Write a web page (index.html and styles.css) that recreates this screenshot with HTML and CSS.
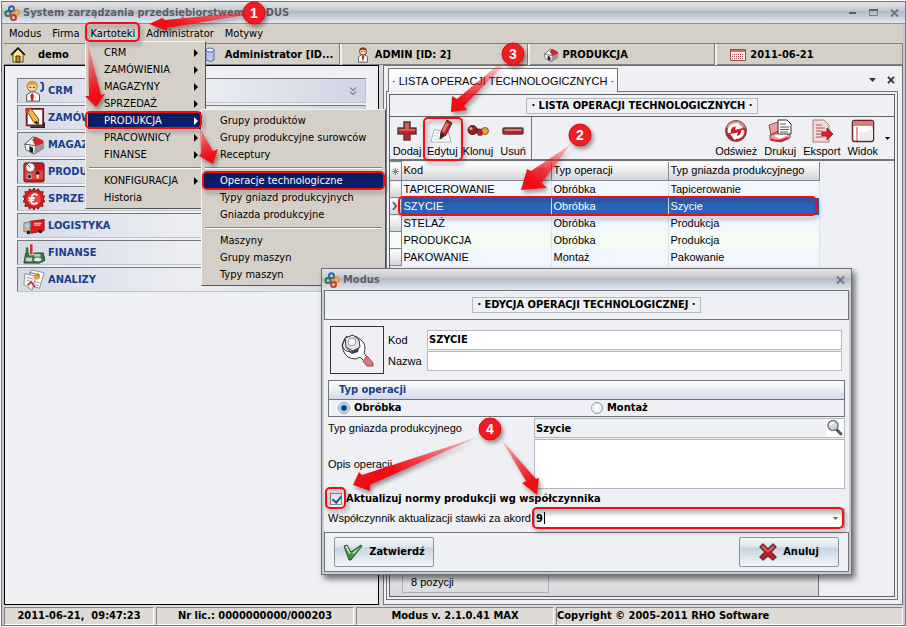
FILE: index.html
```html
<!DOCTYPE html>
<html lang="pl">
<head>
<meta charset="utf-8">
<title>System zarządzania przedsiębiorstwem MODUS</title>
<link rel="stylesheet" href="styles.css">
</head>
<body>
<svg class="defs" aria-hidden="true">
  <defs>
    <symbol id="logo" viewBox="0 0 16 16"><g fill="none" stroke-width="2"><circle cx="4" cy="8.500" r="2.600" stroke="#17815a"/><circle cx="7.500" cy="3.800" r="2.500" stroke="#2463ae"/><circle cx="12.500" cy="7.500" r="2.500" stroke="#e89a30"/><circle cx="9.500" cy="12.500" r="2.500" stroke="#c93b22"/><path d="M6 9l3 1M9 5l2 1" stroke="#c4502f"/></g></symbol>
    <symbol id="house" viewBox="0 0 16 16"><path d="M3 7v8h10V7L8 2z" fill="#ffe98c" stroke="#51441a"/><path d="M1 8l7-7 7 7" fill="none" stroke="#111" stroke-width="1.600"/><path d="M6 15V9h4v6z" fill="#c98c32" stroke="#3c2b0e"/></symbol>
    <symbol id="db" viewBox="0 0 16 16"><path d="M1 3v10q5 3 8 0V3z" fill="#b9c4ec" stroke="#5b68a8"/><ellipse cx="5" cy="3" rx="4" ry="2" fill="#eef1fc" stroke="#5b68a8"/></symbol>
    <symbol id="shop" viewBox="0 0 24 24"><path d="M2 11l9-7 11 5v7l-10 6-9-5z" fill="#f7f7f7" stroke="#555"/><path d="M2 11l9-8 11 5-8 5z" fill="#f4f4f4" stroke="#444"/><path d="M10 6l4-3 8 4v4l-8 3z" fill="#d3252b"/><path d="M13 14l9-4v6l-10 6z" fill="#999"/><path d="M7 13v6l4 2v-6z" fill="#222"/></symbol>
    <symbol id="man" viewBox="0 0 16 18"><path d="M3 17v-6l3-2h4l3 2v6z" fill="#fff" stroke="#555"/><circle cx="8" cy="5" r="4" fill="#f8d2aa" stroke="#6d3212"/><path d="M4 4q0-3.500 4-3.500T12 4q-4-2-8 0" fill="#873b13"/><path d="M8 9l1.500 2L8 17l-1.500-6z" fill="#d4171d"/><path d="M6 5h1M9 5h1" stroke="#222"/></symbol>
    <symbol id="cal" viewBox="0 0 16 12"><path d="M.5.5h15v11H.5z" fill="#fff5f3" stroke="#86504e"/><path d="M1 2h14" stroke="#db6969" stroke-width="2"/><path d="M2 5.500h12M2 7.500h12M2 9.500h12" stroke="#ad4747" stroke-dasharray="1 1"/></symbol>
    <symbol id="crm" viewBox="0 0 24 24"><path d="M4 23v-7l5-3h4l5 3v7z" fill="#fff" stroke="#444"/><circle cx="10" cy="7" r="5.500" fill="#ffd2a0" stroke="#a5661c"/><path d="M4 7q0-6 6-6t6 6q-5-4-12 0" fill="#dda12e"/><path d="M7 8h2M11 8h2" stroke="#222"/><path d="M10 14l2 3-1 6H9l-1-6z" fill="#d5191f"/><path d="M19 3q3-1 3 3v3q0 3-3 3" fill="none" stroke="#223a8b" stroke-width="2"/></symbol>
    <symbol id="order" viewBox="0 0 24 24"><path d="M4 2h18v18H4z" fill="#fff" stroke="#771a1d" stroke-width="2"/><path d="M8 22h15v-5" fill="none" stroke="#222" stroke-width="2"/><path d="M4 4l4-3 9 12v6l-5-2z" fill="#f6b83c" stroke="#673e13"/><path d="M2 3l4-2 2 3-4 3z" fill="#d93c38"/><path d="M15 15l2 4-5-2z" fill="#241813"/></symbol>
    <symbol id="machine" viewBox="0 0 24 24"><rect x="1" y="2" width="22" height="21" rx="2" fill="#c51b20" stroke="#69151a"/><path d="M2 20V4q9 8 20 6v10z" fill="#e34443"/><circle cx="8" cy="7" r="5" fill="#f4f4f4" stroke="#555"/><path d="M8 7l-3-3" stroke="#222"/><circle cx="7" cy="17" r="2.500" fill="#333" stroke="#ccc"/><path d="M16 12v7" stroke="#fff" stroke-width="2"/><circle cx="16" cy="13" r="2" fill="#222"/></symbol>
    <symbol id="euro" viewBox="0 0 24 24"><path d="M12 0l2 3 3-2 1 3 4 0-1 4 3 1-2 3 2 3-3 1 1 4-4 0-1 3-3-2-2 3-2-3-3 2-1-3-4 0 1-4-3-1 2-3-2-3 3-1-1-4 4 0 1-3 3 2z" fill="#cf2020" stroke="#7f1517"/><circle cx="12" cy="12" r="7.500" fill="#e64745"/><path d="M16 8q-6-4-7 4t7 4M6 11h7M6 13.500h6" fill="none" stroke="#fff" stroke-width="1.800"/></symbol>
    <symbol id="truck" viewBox="0 0 24 24"><path d="M7 7l16-2v12l-14 3z" fill="#da1d22" stroke="#8a1518"/><path d="M1 9l7-2v12l-7-1z" fill="#e9a784" stroke="#777"/><path d="M2 10l5-1v4H2z" fill="#8ddbe2"/><path d="M12 9h8M12 11h7" stroke="#fff"/><circle cx="6" cy="19" r="2" fill="#222"/><circle cx="19" cy="18" r="2" fill="#222"/></symbol>
    <symbol id="bank" viewBox="0 0 24 24"><path d="M3 12h19l2 8-6 3H1z" fill="#49704e" stroke="#21402b"/><path d="M3 6h3v12H3z" fill="#337640"/><path d="M7 2h4v12H7z" fill="#cc3537" stroke="#eee"/><path d="M12 13h7v3h-7z" fill="#a7d8a9"/><ellipse cx="16" cy="19" rx="4" ry="2" fill="#dcebdc"/><path d="M3 17h7v4H3z" fill="#c5d5c6"/></symbol>
    <symbol id="report" viewBox="0 0 24 24"><path d="M9 1l14 3-5 17-14-4z" fill="#fff" stroke="#888"/><path d="M2 5l12 3-4 15-9-6z" fill="#f6f6f6" stroke="#888"/><circle cx="15" cy="8" r="3.500" fill="#ef9a41"/><path d="M15 8V4.500A3.500 3.500 0 0118.500 8z" fill="#55a944"/><path d="M4 9l7 2M4 12l6 2M13 14l5 1M13 17l4 1" stroke="#9191a6"/><path d="M5 18l4-4 4 6" fill="none" stroke="#c83a36" stroke-width="2"/><path d="M7 4l6 1" stroke="#4b62a9"/></symbol>
    <symbol id="plus" viewBox="0 0 24 24"><path d="M9 3h6v6h6v6h-6v6H9v-6H3V9h6z" fill="#bd2224" stroke="#54413f" stroke-width="1.500"/><path d="M10 4h4v6h6v2H4v-2h6z" fill="#dc5c59"/></symbol>
    <symbol id="edit" viewBox="0 0 24 24"><path d="M4 11l14 1 3 11H1z" fill="#fff" stroke="#aaa"/><path d="M4 20h12M5 14h4M4 17h5" stroke="#c7c7c7"/><path d="M17 1l5 3-6 12-6 4 1-7z" fill="#c71e22" stroke="#462c2c"/><path d="M16 3l3 2-5 9-2-2z" fill="#ec7670"/><path d="M11 13l4 3-5 4z" fill="#342b2d"/></symbol>
    <symbol id="clone" viewBox="0 0 24 24"><path d="M6 9l12 1v5L6 14z" fill="#891a1a"/><circle cx="6.500" cy="11" r="4.500" fill="#a9191a" stroke="#3f2020"/><circle cx="19" cy="12" r="3.500" fill="#dca74b" stroke="#815a26"/><circle cx="14" cy="14" r="3" fill="#b82323"/><circle cx="5" cy="9.500" r="1.600" fill="#eea19d"/></symbol>
    <symbol id="minus" viewBox="0 0 24 24"><rect x="2" y="9" width="20" height="6" rx="1" fill="#b92123" stroke="#54413f" stroke-width="1.500"/><path d="M3.500 11h17" stroke="#e47572" stroke-width="2"/></symbol>
    <symbol id="refresh" viewBox="0 0 24 24"><circle cx="12" cy="12" r="10.500" fill="#cf1c22" stroke="#555"/><path d="M2.500 9a10 10 0 0119 0q-9-3-19 0z" fill="#e58683"/><path d="M5.500 14a6 6 0 018-7.500" fill="none" stroke="#fff" stroke-width="3.200"/><path d="M13 3l6 6-8 2z" fill="#fff"/><path d="M18.500 11a6 6 0 01-8 7" fill="none" stroke="#fff" stroke-width="3.200"/><path d="M11 21.500L6 15l8-1.500z" fill="#fff"/></symbol>
    <symbol id="print" viewBox="0 0 24 24"><path d="M1 6l9-3 2 10-9 3zM2 16l10-5 10 3v5l-9 4-11-2z" fill="#eba09d" stroke="#94504f"/><path d="M6 17l6-3 8 2-8 4z" fill="#fff"/><path d="M10 1h9l4 4v10H10z" fill="#fff" stroke="#333"/><path d="M12 5h6M12 8h9M12 10.500h9M12 13h8" stroke="#555"/><path d="M3 20q7 4 17-1" fill="none" stroke="#c6282b" stroke-width="2"/></symbol>
    <symbol id="export" viewBox="0 0 24 24"><path d="M3 1h11l5 5v17H3z" fill="#f7d9d7" stroke="#a27e7d"/><path d="M6 6h6M6 9h9M6 12h7M6 15h6M6 18h7" stroke="#a35b5a"/><path d="M12 13h5V9l6 6-6 6v-4h-5z" fill="#da2327" stroke="#8b2627"/></symbol>
    <symbol id="view" viewBox="0 0 24 24"><rect x="1.500" y="1.500" width="21" height="21" rx="2" fill="#fff" stroke="#6a2428" stroke-width="1.500"/><path d="M2 2h20v5H2z" fill="#db7e7b"/><path d="M6 8v14" stroke="#c43134"/><path d="M8 13q7 1 14-3v11H8z" fill="#ececec"/></symbol>
    <symbol id="wrench" viewBox="0 0 34 34"><path d="M7 3q-6 6-4 14 3 9 13 9l4-2 6 6 3-3-5-7q3-8-3-13-4-4-8-4l5 7q0 7-7 9-7 0-9-7z" fill="#fff" stroke="#333"/><path d="M5 5l8-3 6 5 1 7-7 4-7-4z" fill="#e5e5ea" stroke="#333"/><path d="M5 14l7 5 7-4-1 4-6 2z" fill="#34365e"/><circle cx="12" cy="9" r="4" fill="#fafafa" stroke="#999"/><path d="M23 28l4-5 6 7v3h-6z" fill="#dd7b7c" stroke="#9b4649"/></symbol>
    <symbol id="lens" viewBox="0 0 18 18"><path d="M10 10l5 5" stroke="#555" stroke-width="3" stroke-linecap="round"/><circle cx="7" cy="6.500" r="5" fill="#d5d8d9" stroke="#777" stroke-width="1.500"/><path d="M4 6q1-3 4-2" fill="none" stroke="#fff" stroke-width="2"/></symbol>
    <symbol id="check" viewBox="0 0 20 18"><path d="M1 3l3-1 4 7 10-7 1 1L8 17H6z" fill="#42a33b" stroke="#3c453c"/><path d="M2 3l2 0 4 8 9-7-9 10z" fill="#d6e7d3"/><path d="M5 12l3-2 4 1-5 5z" fill="#2f9a2b"/></symbol>
    <symbol id="cross" viewBox="0 0 18 18"><path d="M4 1l5 5 5-5 3 3-5 5 5 5-3 3-5-4-5 4-3-3 5-5-5-5z" fill="#d51517" stroke="#633435" stroke-width="1.500" stroke-linejoin="round"/><path d="M4 2.500l5 5 5-5 1.500 1.500-4 4q-3 1-5 0l-4-4z" fill="#df6663"/></symbol>
    <symbol id="close" viewBox="0 0 9 8"><path d="M1 .5l7 7M8 .5l-7 7" stroke="currentColor" stroke-width="2"/></symbol>
    <symbol id="down" viewBox="0 0 8 8"><path d="M1 .5l3 3 3-3M1 4.500l3 3 3-3" fill="none" stroke="#444"/></symbol>
  </defs>
</svg>

<div class="window">
  <header class="titlebar">
    <svg class="logo"><use href="#logo"/></svg>
    <h1 class="caption">System zarządzania przedsiębiorstwem MODUS</h1>
    <div class="winbtns">
      <button class="wbtn" aria-label="Minimalizuj"><svg width="9" height="9"><path d="M1 5h7" stroke="#555b68" stroke-width="2"/></svg></button>
      <button class="wbtn" aria-label="Maksymalizuj"><svg width="9" height="9"><path d="M.5 1.500h8v6h-8z" fill="none" stroke="#6f7f99"/><path d="M0 2h9" stroke="#5a6274" stroke-width="2"/></svg></button>
      <button class="wbtn" aria-label="Zamknij"><svg width="9" height="8"><use href="#close"/></svg></button>
    </div>
  </header>

  <nav class="menubar">
    <button class="mi">Modus</button><button class="mi">Firma</button><button class="mi">Kartoteki</button><button class="mi">Administrator</button><button class="mi">Motywy</button>
  </nav>

  <div class="infobar">
    <div class="info"><svg class="i16"><use href="#house"/></svg><span>demo</span></div>
    <div class="info info-user"><svg class="i16"><use href="#db"/></svg><span>Administrator [ID...</span></div>
    <div class="info"><svg class="i16"><use href="#man"/></svg><span>ADMIN [ID: 2]</span></div>
    <div class="info"><svg class="i16"><use href="#shop"/></svg><span>PRODUKCJA</span></div>
    <div class="info"><svg class="i16"><use href="#cal"/></svg><span>2011-06-21</span></div>
  </div>

  <main class="work">
    <aside class="side">
      <a class="nav" href="#"><svg><use href="#crm"/></svg><span>CRM</span><svg class="chev"><use href="#down"/></svg></a>
      <a class="nav" href="#"><svg><use href="#order"/></svg><span>ZAMÓWIENIA</span><svg class="chev"><use href="#down"/></svg></a>
      <a class="nav" href="#"><svg><use href="#shop"/></svg><span>MAGAZYNY</span></a>
      <a class="nav" href="#"><svg><use href="#machine"/></svg><span>PRODUKCJA</span></a>
      <a class="nav" href="#"><svg><use href="#euro"/></svg><span>SPRZEDAŻ</span></a>
      <a class="nav" href="#"><svg><use href="#truck"/></svg><span>LOGISTYKA</span></a>
      <a class="nav" href="#"><svg><use href="#bank"/></svg><span>FINANSE</span></a>
      <a class="nav" href="#"><svg><use href="#report"/></svg><span>ANALIZY</span></a>
    </aside>

    <section class="dock">
      <div class="tabs">
        <button class="tab">· LISTA OPERACJI TECHNOLOGICZNYCH ·</button>
        <div class="tabtools">
          <button class="wbtn dark" aria-label="Lista kart"><svg width="7" height="4"><path d="M0 0h7L3.500 4z" fill="currentColor"/></svg></button>
          <button class="wbtn dark" aria-label="Zamknij kartę"><svg width="8" height="8"><use href="#close"/></svg></button>
        </div>
      </div>
      <div class="page">
        <div class="sheet">
          <div class="heading"><h2 class="plate">· LISTA OPERACJI TECHNOLOGICZNYCH ·</h2></div>
          <div class="tools">
            <div class="toolset">
              <button class="tool"><svg><use href="#plus"/></svg>Dodaj</button>
              <button class="tool"><svg><use href="#edit"/></svg>Edytuj</button>
              <button class="tool"><svg><use href="#clone"/></svg>Klonuj</button>
              <button class="tool"><svg><use href="#minus"/></svg>Usuń</button>
            </div>
            <div class="toolset toolset-right">
              <button class="tool"><svg><use href="#refresh"/></svg>Odśwież</button>
              <button class="tool"><svg><use href="#print"/></svg>Drukuj</button>
              <button class="tool"><svg><use href="#export"/></svg>Eksport</button>
              <button class="tool"><svg><use href="#view"/></svg>Widok</button>
              <button class="wbtn dark" aria-label="Więcej"><svg width="5" height="3"><path d="M0 0h5L2.500 3z" fill="#000"/></svg></button>
            </div>
          </div>
          <table class="grid">
            <colgroup><col class="c-mark"><col class="c-kod"><col class="c-typ"><col class="c-gn"></colgroup>
            <thead><tr><th class="mark"><svg width="7" height="7"><path d="M3.500 0v7M0 3.500h7M1 1l5 5M6 1L1 6" stroke="#888"/></svg></th><th><span class="sorted">Kod<svg width="7" height="6"><path d="M.5.500h6L3.500 5.500z" fill="none" stroke="#999"/></svg></span></th><th>Typ operacji</th><th>Typ gniazda produkcyjnego</th></tr></thead>
            <tbody>
              <tr><td class="mark"></td><td>TAPICEROWANIE</td><td>Obróbka</td><td>Tapicerowanie</td></tr>
              <tr class="sel"><td class="mark"><svg width="6" height="8"><path d="M1 0l3 4-3 4" fill="none" stroke="#5b6080" stroke-width="2"/></svg></td><td>SZYCIE</td><td>Obróbka</td><td>Szycie</td></tr>
              <tr><td class="mark"></td><td>STELAŻ</td><td>Obróbka</td><td>Produkcja</td></tr>
              <tr class="alt"><td class="mark"></td><td>PRODUKCJA</td><td>Obróbka</td><td>Produkcja</td></tr>
              <tr><td class="mark"></td><td>PAKOWANIE</td><td>Montaż</td><td>Pakowanie</td></tr>
            </tbody>
          </table>
          <div class="summary"><div class="count">8 pozycji</div></div>
        </div>
      </div>
    </section>
  </main>

  <footer class="status">
    <div class="st st-a">2011-06-21,&nbsp; 09:47:23</div>
    <div class="st st-b">Nr lic.: 0000000000/000203</div>
    <div class="st st-b">Modus v. 2.1.0.41 MAX</div>
    <div class="st st-c">Copyright © 2005-2011 RHO Software</div>
  </footer>
</div>

<div class="menu menu-main">
  <button class="item sub">CRM</button>
  <button class="item sub">ZAMÓWIENIA</button>
  <button class="item sub">MAGAZYNY</button>
  <button class="item sub">SPRZEDAŻ</button>
  <button class="item sub on">PRODUKCJA</button>
  <button class="item sub">PRACOWNICY</button>
  <button class="item sub">FINANSE</button>
  <hr class="sep">
  <button class="item sub">KONFIGURACJA</button>
  <button class="item">Historia</button>
</div>

<div class="menu menu-sub">
  <button class="item">Grupy produktów</button>
  <button class="item">Grupy produkcyjne surowców</button>
  <button class="item">Receptury</button>
  <hr class="sep">
  <button class="item on">Operacje technologiczne</button>
  <button class="item">Typy gniazd produkcyjnych</button>
  <button class="item">Gniazda produkcyjne</button>
  <hr class="sep">
  <button class="item">Maszyny</button>
  <button class="item">Grupy maszyn</button>
  <button class="item">Typy maszyn</button>
</div>

<form class="dialog">
  <div class="titlebar">
    <svg class="logo"><use href="#logo"/></svg>
    <h2 class="caption">Modus</h2>
    <div class="winbtns"><button type="button" class="wbtn" aria-label="Zamknij okno"><svg width="9" height="8"><use href="#close"/></svg></button></div>
  </div>
  <div class="dlg-head"><h3 class="plate">· EDYCJA OPERACJI TECHNOLOGICZNEJ ·</h3></div>
  <div class="dlg-body">
    <div class="ident">
      <div class="pic"><svg><use href="#wrench"/></svg></div>
      <div class="pairs">
        <label for="kod">Kod</label><input class="field" id="kod" type="text" value="SZYCIE">
        <label for="nazwa">Nazwa</label><input class="field" id="nazwa" type="text">
      </div>
    </div>
    <fieldset class="group">
      <legend class="group-title">Typ operacji</legend>
      <div class="radios">
        <label><input type="radio" name="typ" checked>Obróbka</label>
        <label><input type="radio" name="typ">Montaż</label>
      </div>
    </fieldset>
    <div class="rows">
      <label for="gniazdo">Typ gniazda produkcyjnego</label>
      <div class="lookup"><input class="field flat" id="gniazdo" type="text" value="Szycie"><button type="button" class="pick" aria-label="Szukaj"><svg><use href="#lens"/></svg></button></div>
      <label for="opis">Opis operacji</label>
      <textarea class="field area" id="opis"></textarea>
      <label class="tick"><input type="checkbox" checked>Aktualizuj normy produkcji wg współczynnika</label>
      <label for="wsp">Współczynnik aktualizacji stawki za akord</label>
      <div class="lookup combo"><input class="field flat" id="wsp" type="text" value="9"><button type="button" class="pick" aria-label="Rozwiń"><svg width="5" height="3"><path d="M0 0h5L2.500 3z" fill="#666"/></svg></button></div>
    </div>
  </div>
  <div class="dlg-foot">
    <button type="button" class="btn"><svg class="ic-check"><use href="#check"/></svg>Zatwierdź</button>
    <button type="button" class="btn"><svg class="ic-cross"><use href="#cross"/></svg>Anuluj</button>
  </div>
</form>

<svg class="marks" width="906" height="627" viewBox="0 0 906 627" aria-hidden="true">
  <defs>
    <linearGradient id="a1" gradientUnits="userSpaceOnUse" x1="244" y1="14" x2="149" y2="24"><stop offset="0" stop-color="#f22" stop-opacity=".5"/><stop offset=".8" stop-color="#f00f14"/></linearGradient>
    <linearGradient id="a1b" gradientUnits="userSpaceOnUse" x1="88" y1="43" x2="95" y2="107"><stop offset="0" stop-color="#f22" stop-opacity=".15"/><stop offset=".8" stop-color="#f00f14"/></linearGradient>
    <linearGradient id="a1c" gradientUnits="userSpaceOnUse" x1="200" y1="128" x2="213" y2="164"><stop offset="0" stop-color="#f22" stop-opacity=".3"/><stop offset=".8" stop-color="#f00f14"/></linearGradient>
    <linearGradient id="a2" gradientUnits="userSpaceOnUse" x1="570" y1="145" x2="521" y2="190"><stop offset="0" stop-color="#f22" stop-opacity=".2"/><stop offset=".8" stop-color="#f00f14"/></linearGradient>
    <linearGradient id="a3" gradientUnits="userSpaceOnUse" x1="500" y1="65" x2="451" y2="112"><stop offset="0" stop-color="#f22" stop-opacity=".2"/><stop offset=".8" stop-color="#f00f14"/></linearGradient>
    <linearGradient id="a4" gradientUnits="userSpaceOnUse" x1="478" y1="437" x2="354" y2="485"><stop offset="0" stop-color="#f22" stop-opacity=".2"/><stop offset=".7" stop-color="#f00f14"/></linearGradient>
    <linearGradient id="a4b" gradientUnits="userSpaceOnUse" x1="501" y1="439" x2="537" y2="495"><stop offset="0" stop-color="#f22" stop-opacity=".2"/><stop offset=".8" stop-color="#f00f14"/></linearGradient>
    <filter id="sh" x="-20%" y="-20%" width="150%" height="150%"><feDropShadow dx="2" dy="3" stdDeviation="2" flood-opacity=".4"/></filter>
  </defs>
  <g filter="url(#sh)">
    <path d="M246 12L165 20l-3-2-13 6 18 7v-3L246 15z" fill="url(#a1)"/>
    <path d="M88 43l1 53h-4l11 11 9-13-4 1z" fill="url(#a1b)"/>
    <path d="M200 128l1 25-2 3 14 8 5-15-5 2z" fill="url(#a1c)"/>
    <path d="M570 145L531 171l-4-2-6 21 26-2-5-5z" fill="url(#a2)"/>
    <path d="M499 64L457 99l-5-3-1 16 16-2-3-4L503 66z" fill="url(#a3)"/>
    <path d="M478 437L362 475l-3-3-6 13 17 6v-6z" fill="url(#a4)"/>
    <path d="M501 439l25 42-4 2 15 12 2-17-3 1z" fill="url(#a4b)"/>
  </g>
  <g class="rings" filter="url(#sh)">
    <rect x="86" y="23" width="53" height="18" rx="4"/>
    <rect x="86" y="112" width="115" height="16" rx="4"/>
    <rect x="203" y="172" width="181" height="17" rx="4"/>
    <rect x="424" y="118" width="38" height="42" rx="4"/>
    <rect x="399" y="197" width="417" height="18" rx="4"/>
    <rect x="326" y="488" width="19" height="20" rx="4"/>
    <rect x="533" y="508" width="310" height="20" rx="4"/>
  </g>
  <g class="dots" filter="url(#sh)">
    <circle cx="254" cy="13" r="11"/><circle cx="580" cy="135" r="11"/><circle cx="513" cy="54" r="11"/><circle cx="490" cy="429" r="11"/>
  </g>
  <g class="nums"><text x="254" y="18">1</text><text x="580" y="140">2</text><text x="513" y="59">3</text><text x="490" y="434">4</text></g>
</svg>
</body>
</html>
```
FILE: styles.css
```css
* { box-sizing: border-box; }
html, body { margin: 0; background: #fff; }
body {
  position: relative;
  font: 11px/16px "DejaVu Sans Condensed", "Liberation Sans", sans-serif;
  color: #000;
}
h1, h2, h3 { margin: 0; font-size: 11px; }
button { font: inherit; color: inherit; background: none; border: 0; padding: 0; }
svg { display: block; flex: none; }
.defs { position: absolute; width: 0; height: 0; }

/* Main window */
.window {
  display: flex; flex-direction: column;
  min-height: calc(100vh - 2px);
  margin: 1px 0 1px 1px;
  border: 1px solid #70757f;
  background: #c5c8ce;
}
.titlebar {
  display: flex; align-items: center; gap: 3px;
  height: 22px; padding: 0 6px 0 2px;
  border-bottom: 1px solid #8e939d;
  background: linear-gradient(#e4e4e6 0, #c9cacd 40%, #b3bac6 45%, #e2e8f3 100%);
}
.logo { width: 16px; height: 16px; }
.caption { flex: 1; color: #5a5e69; }
.winbtns { display: flex; gap: 12px; }
.wbtn { display: flex; align-items: center; justify-content: center; color: #6a7890; }
.dark { color: #333; }
.menubar { display: flex; gap: 11px; height: 19px; margin: 0 2px; padding-left: 5px; background: #d4d0c8; }
.infobar { display: flex; gap: 2px; margin: 0 2px; background: #f4f3f0; border-top: 1px solid #82807c; }
.info {
  display: flex; align-items: center; flex: 1 1 20px; gap: 4px;
  height: 21px; padding: 1px 0 0 13px; min-width: 0;
  background: #d4d0c8; border-right: 1px solid #82807c; border-bottom: 1px solid #82807c;
  font-weight: bold; white-space: nowrap;
}
.info-user { flex: 0 0 148px; }
.info:first-child { padding-left: 6px; gap: 12px; }
.i16 { width: 16px; height: 16px; }
.work { display: flex; flex: 1; gap: 4px; margin: 0 2px; background: #d8dade; }

/* Left navigation */
.side {
  display: flex; flex-direction: column; gap: 2px; flex: 0 0 375px;
  padding: 12px; border: 1px solid #000; background: #eff0f3;
}
.nav {
  display: flex; align-items: center; gap: 3px;
  height: 25px; padding: 0 8px 0 5px;
  border: 1px solid #75777d; border-right-color: #c0c4ca; border-bottom-color: #c0c4ca;
  background: linear-gradient(90deg, #d6dae5, #eceef3 50%, #cfd5e2);
  color: #16408c; font-weight: bold; text-decoration: none;
}
.nav svg { width: 22px; height: 22px; }
.nav span { flex: 1; }
.nav .chev { width: 8px; height: 8px; }

/* Right dock */
.dock {
  display: flex; flex-direction: column; flex: 1; min-width: 0;
  padding: 2px 4px 4px 2px; border: 1px solid #70737a; background: #eff0f3;
}
.tabs { display: flex; justify-content: space-between; align-items: center; padding: 0 3px 0 2px; height: 23px; }
.tab {
  position: relative; align-self: stretch; padding: 0 3px; margin-bottom: -1px;
  border: 1px solid #70737a; border-bottom: 0; background: linear-gradient(#fff, #eff0f3);
}
.tab, .tools, .grid, .count, .dlg-body { font-family: "Liberation Sans", sans-serif; font-size: 11px; }
.tabtools { display: flex; gap: 11px; }
.page { display: flex; flex: 1; padding: 2px; border: 1px solid #70737a; }
.sheet { display: flex; flex-direction: column; flex: 1; min-width: 0; border: 1px solid #5f6267; background: #eff0f3; }
.heading { display: flex; justify-content: center; align-items: center; height: 22px; border-bottom: 1px solid #5f6267; }
.plate { padding: 0 4px; border: 1px solid #b4b9c0; line-height: 14px; white-space: nowrap; }
.tools { display: flex; justify-content: space-between; height: 44px; border-bottom: 2px solid #70737a; }
.toolset { display: flex; gap: 5px; padding: 0 3px 0 2px; border-right: 1px solid #70737a; }
.toolset-right { gap: 7px; border: 0; padding-right: 4px; }
.tool { display: flex; flex-direction: column; align-items: center; gap: 1px; min-width: 30px; line-height: 14px; padding-top: 2px; }
.tool svg { width: 24px; height: 24px; }
.grid { width: 429px; table-layout: fixed; border-collapse: collapse; line-height: 15px; }
.c-mark { width: 11px; }
.c-kod { width: 150px; }
.c-typ { width: 117px; }
.c-gn { width: 151px; }
.grid th, .grid td { padding: 0 2px; height: 17px; text-align: left; font-weight: normal; white-space: nowrap; border-right: 1px solid #dce0e8; }
.grid th { height: 19px; border: 1px solid #84878e; border-top: 0; background: linear-gradient(#fff, #d3d4d8); }
.grid td { background: #f1f6ff; }
.grid .alt td { background: #f3fcf2; }
.grid .sel td { background: #2b63bc; color: #fff; }
.grid .mark, .grid .sel .mark { padding: 0 2px; border: 1px solid #84878e; border-left: 0; background: linear-gradient(#fff, #d3d4d8); }
.sorted { display: flex; justify-content: space-between; align-items: center; padding-right: 4px; }
.summary { width: 429px; margin-top: auto; padding: 0 0 3px 12px; border-right: 1px solid #70737a; background: linear-gradient(#eee, #d4d6da); }
.count { width: 147px; padding: 1px 8px 2px; border: 1px solid #aeb1b7; line-height: 16px; }

/* Status bar */
.status { display: flex; gap: 2px; height: 20px; margin: 0 2px; padding-top: 2px; background: #dedbd6; font-weight: bold; white-space: nowrap; }
.st { border: 1px solid #85827e; border-right-color: #fff; border-bottom-color: #fff; text-align: center; background: #dedbd6; }
.st-a { flex: 0 1 150px; }
.st-b { flex: 0 1 198px; }
.st-c { flex: 1; text-align: left; }

/* Pop-up menus */
.menu {
  position: absolute; z-index: 2; display: flex; flex-direction: column;
  padding: 2px; background: #d4d0c8;
  border: 1px solid #f4f3f0; border-right-color: #55534f; border-bottom-color: #55534f;
}
.menu-main { left: 85px; top: 41px; width: 121px; }
.menu-sub { left: 201px; top: 109px; width: 185px; }
.item { display: flex; justify-content: space-between; align-items: center; height: 17px; padding: 0 5px 0 16px; white-space: nowrap; }
.sub::after { content: ""; border: 4px solid transparent; border-left-color: currentColor; border-right: 0; }
.on { background: #0a1f6b; color: #fff; }
.sep { width: calc(100% - 2px); margin: 4px 1px 3px; border: 0; border-top: 1px solid #84817b; border-bottom: 1px solid #fff; }

/* Edit dialog */
.dialog {
  position: absolute; z-index: 3; left: 321px; top: 268px; width: 531px;
  border: 1px solid #6d7078; background: #c9ccd2;
  box-shadow: 3px 4px 6px rgba(0, 0, 0, .55);
}
.dialog .titlebar { height: 21px; border-bottom: 0; }
.dlg-head { display: flex; justify-content: center; align-items: center; height: 30px; margin: 0 2px; border: 1px solid #70737a; background: #eff0f3; }
.dlg-body { margin: 0 2px; padding: 6px 4px 4px; background: #eff0f3; }
.ident { display: flex; gap: 4px; padding: 0 3px 0 2px; }
.pic { width: 54px; height: 48px; padding: 6px 9px; border: 1px solid #333; }
.pic svg { width: 34px; height: 34px; }
.pairs { display: grid; flex: 1; grid-template-columns: 39px 1fr; gap: 1px 0; align-items: center; align-content: center; }
.field {
  width: 100%; height: 20px; padding: 0 1px; margin: 0;
  border: 1px solid #b3b9bf; background: #fff;
  font: bold 11px/16px "DejaVu Sans Condensed", sans-serif; outline: 0; min-width: 0;
}
.group { margin: 6px 0 0; padding: 0; border: 1px solid #70737a; font: bold 11px/16px "DejaVu Sans Condensed", sans-serif; }
.group-title { float: left; width: 100%; padding: 1px 10px; border-bottom: 1px solid #70737a; color: #16408c; background: linear-gradient(#fff, #d3d9e6); }
.radios { display: grid; grid-template-columns: 1fr 1fr; clear: both; padding-left: 9px; }
.radios label, .tick { display: flex; align-items: center; gap: 4px; }
input[type=radio] {
  appearance: none; width: 12px; height: 12px; margin: 0;
  border: 1px solid #8b98a8; border-radius: 50%; background: radial-gradient(#fff, #dde3ea);
}
input[type=radio]:checked { background: radial-gradient(#123f73 0 2px, #58a3d8 3px, #fff 5px); }
.rows { display: grid; grid-template-columns: 206px 1fr; gap: 1px 0; align-items: center; padding-top: 1px; }
.lookup { display: flex; border: 1px solid #b3b9bf; height: 20px; }
.lookup .field { height: 18px; border: 0; background: none; }
.pick { display: flex; align-items: center; justify-content: center; width: 19px; background: #fff; }
.pick svg { max-width: 18px; max-height: 18px; }
.area { height: 50px; resize: none; }
.rows label { white-space: nowrap; }
.tick { grid-column: 1 / 3; height: 17px; padding-left: 2px; font: bold 11px/16px "DejaVu Sans Condensed", sans-serif; }
input[type=checkbox] {
  appearance: none; width: 12px; height: 12px; margin: 0;
  border: 1px solid #7f8b99; background: #e4ebf3;
}
input[type=checkbox]:checked::before { content: ""; display: block; width: 4px; height: 7px; margin: 0 3px; border: solid #345486; border-width: 0 2px 2px 0; transform: rotate(40deg); }
.combo { background: linear-gradient(#dcdcdc, #fff 50%); }
.combo .pick { background: none; }
.combo .field { background: linear-gradient(#000, #000) 9px 3px / 1px 12px no-repeat; }
.dlg-foot { display: flex; justify-content: space-between; align-items: center; height: 40px; margin: 0 2px 2px; padding: 0 9px; border: 1px solid #70737a; background: #eff0f3; }
.btn {
  display: flex; align-items: center; justify-content: center; gap: 6px;
  width: 100px; height: 30px; border: 1px solid #8792a5; border-radius: 2px;
  background: linear-gradient(#f5f7fa 0, #dfe6ee 33%, #c8d4e0 35%, #f2f5f9 100%);
  font-weight: bold;
}
.ic-check { width: 20px; height: 18px; }
.ic-cross { width: 18px; height: 18px; }

/* Tutorial callouts drawn over the windows */
.marks { position: absolute; z-index: 5; left: 0; top: 0; pointer-events: none; }
.rings rect { fill: none; stroke: #f20d12; stroke-width: 2; }
.dots circle { fill: #ef1c22; stroke: #d80d12; stroke-width: 1; }
.nums text { fill: #fff; font: bold 14px "Liberation Sans", sans-serif; text-anchor: middle; }
```
